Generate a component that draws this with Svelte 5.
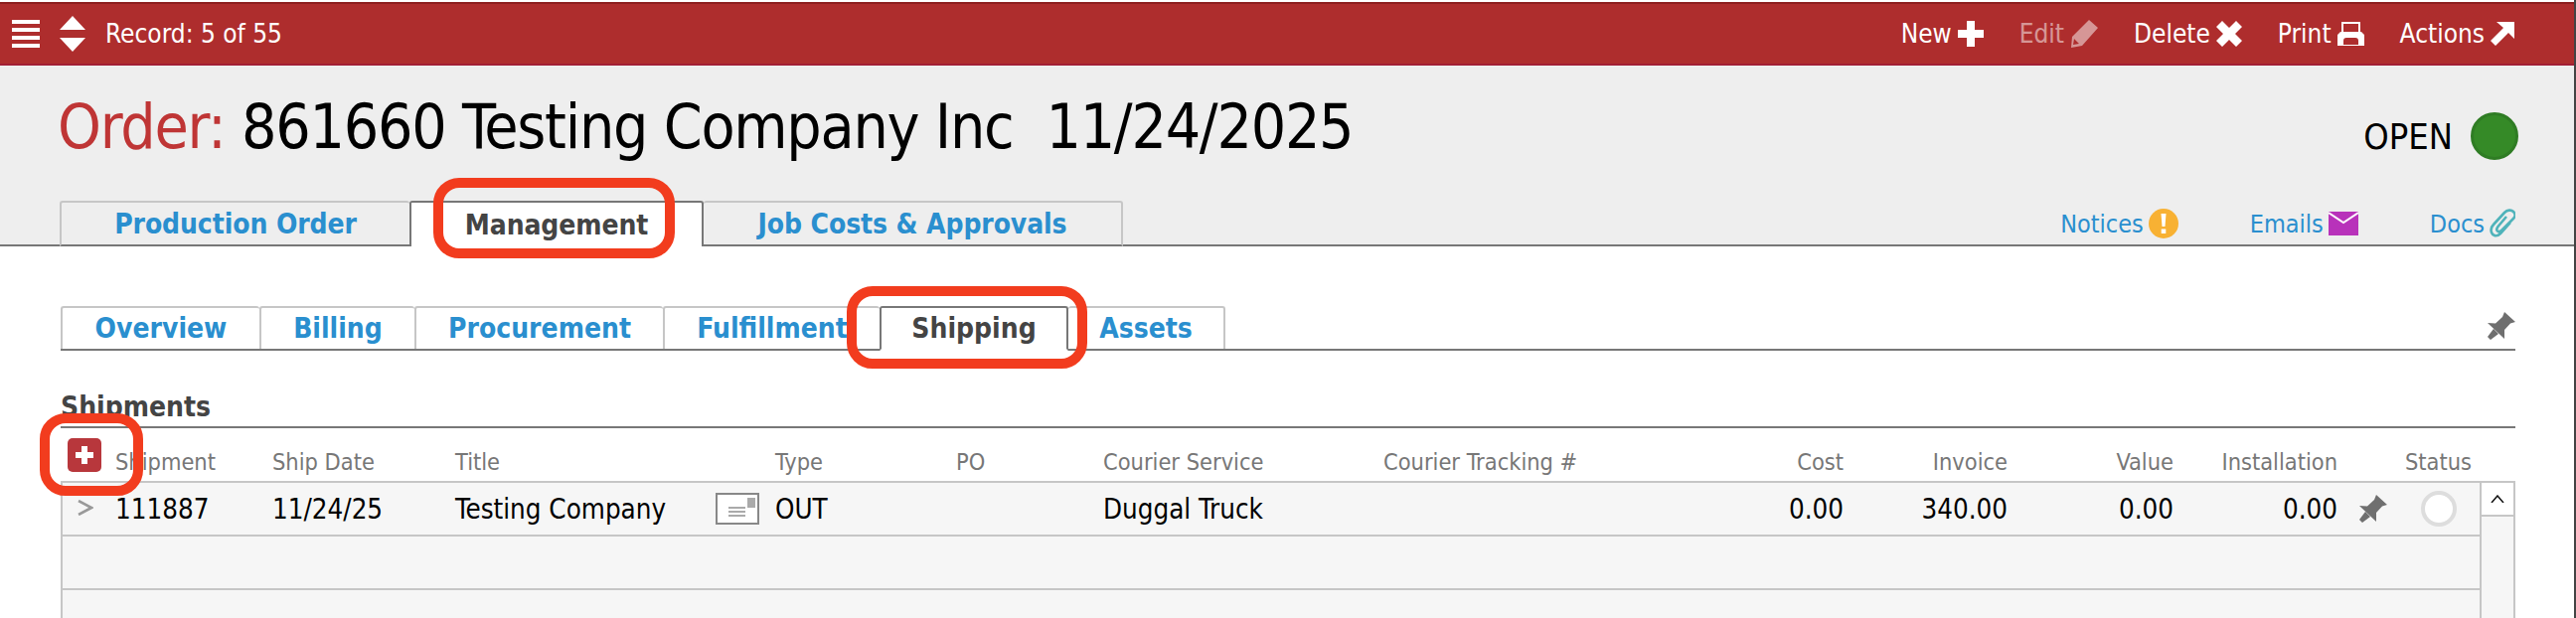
<script>
  const actions = [
    { label: 'New', icon: 'plus' },
    { label: 'Edit', icon: 'pencil', off: true },
    { label: 'Delete', icon: 'cross' },
    { label: 'Print', icon: 'print' },
    { label: 'Actions', icon: 'arrow' }
  ];
  const mainTabs = ['Production Order', 'Management', 'Job Costs & Approvals'];
  const subTabs = ['Overview', 'Billing', 'Procurement', 'Fulfillment', 'Shipping', 'Assets'];
  const pinPath = 'M17 0L28 10L23 11.5L17 18L17 27L0 11L8 11.5L15 5zM6 17L11 22L3 28L0 25z';
</script>

<div class="page">
  <div class="topbar">
    <svg class="burger" viewBox="0 0 28 28" width="28" height="28"><path d="M0 0h28v4H0zM0 8h28v4H0zM0 16h28v4H0zM0 24h28v4H0z" fill="#fff"/></svg>
    <svg class="updown" viewBox="0 0 26 36" width="26" height="36"><path d="M13 0l13 14H0zM0 22h26L13 36z" fill="#fff"/></svg>
    <span class="record">Record: 5 of 55</span>
    <div class="actions">
      {#each actions as a}
        <span class="action" class:off={a.off}>
          {a.label}
          {#if a.icon === 'plus'}
            <svg viewBox="0 0 26 26" width="26" height="26"><path d="M9 0h8v9h9v8h-9v9H9v-9H0V9h9z" fill="#fff"/></svg>
          {:else if a.icon === 'pencil'}
            <svg viewBox="0 0 28 28" width="28" height="28"><path d="M19 0l9 8-16 18-11 2 1-11zM4 19l-1 6 6-1z" fill="#fff" fill-rule="evenodd"/></svg>
          {:else if a.icon === 'cross'}
            <svg viewBox="0 0 26 26" width="26" height="26"><path d="M6 0l7 7 7-7 6 6-7 7 7 7-6 6-7-7-7 7-6-6 7-7-7-7z" fill="#fff"/></svg>
          {:else if a.icon === 'print'}
            <svg viewBox="0 0 27 24" width="27" height="24"><path d="M4 0h19v10h-2V2H6v8H4zM0 13l3-3h21l3 3v11H0zM6 23v-4c0-2 1-3 3-3h9c2 0 3 1 3 3v4z" fill="#fff" fill-rule="evenodd"/></svg>
          {:else}
            <svg viewBox="0 0 24 24" width="24" height="24"><path d="M6 0H24V17L18 11L5 24L0 19L13 6z" fill="#fff"/></svg>
          {/if}
        </span>
      {/each}
    </div>
  </div>

  <header class="head">
    <div class="title-row">
      <h1><span class="order">Order:</span> 861660 Testing Company Inc&nbsp; 11/24/2025</h1>
      <div class="state">OPEN <i class="dot"></i></div>
    </div>
    <div class="tab-row">
      <div class="tabs main">
        {#each mainTabs as t}
          <span class="tab" class:active={t === 'Management'}>{t}</span>
        {/each}
      </div>
      <div class="links">
        <span class="link">Notices
          <svg viewBox="0 0 30 30" width="30" height="30"><circle cx="15" cy="15" r="15" fill="#f8b133"/><path d="M12.5 5h5l-1 13h-3zM12.7 20.5h4.6v4.5h-4.6z" fill="#fff"/></svg>
        </span>
        <span class="link">Emails
          <svg viewBox="0 0 30 24" width="30" height="24"><path d="M0 0h30v24H0z" fill="#b832ba"/><path d="M0 1l15 10L30 1" fill="none" stroke="#fff" stroke-width="2"/></svg>
        </span>
        <span class="link">Docs
          <svg viewBox="0 0 26 30" width="26" height="30"><path d="M21 14L11 25C7 29 3 27 2 24C1 21 2 18 4 16L15 4C18 1 22 1 24 3C26 5 26 8 24 10L12 22C10 24 8 23 7.5 22C7 21 7 20 8.5 18L17 8" fill="none" stroke="#4fb3ba" stroke-width="2.6"/></svg>
        </span>
      </div>
    </div>
  </header>

  <main class="body">
    <div class="tabs sub">
      {#each subTabs as t}
        <span class="tab" class:active={t === 'Shipping'}>{t}</span>
      {/each}
      <svg class="pin toppin" viewBox="0 0 28 28" width="28" height="28"><path d={pinPath} fill="#6f6f6f"/></svg>
    </div>

    <h2>Shipments</h2>

    <div class="grid headrow">
      <span class="addcell"><span class="addbtn"><svg viewBox="0 0 18 18" width="18" height="18"><path d="M6 0h6v6h6v6h-6v6H6v-6H0V6h6z" fill="#fff"/></svg></span></span>
      <span>Shipment</span>
      <span>Ship Date</span>
      <span>Title</span>
      <span></span>
      <span>Type</span>
      <span>PO</span>
      <span>Courier Service</span>
      <span>Courier Tracking #</span>
      <span class="num">Cost</span>
      <span class="num">Invoice</span>
      <span class="num">Value</span>
      <span class="num">Installation</span>
      <span></span>
      <span>Status</span>
    </div>

    <div class="table">
      <div class="rows">
        <div class="grid row">
          <span class="chev"><svg viewBox="0 0 16 16" width="16" height="16"><path d="M1 1l13 7-13 7" fill="none" stroke="#999" stroke-width="2.6"/></svg></span>
          <span>111887</span>
          <span>11/24/25</span>
          <span>Testing Company</span>
          <span class="mailcell">
            <span class="mailbox">
              <svg viewBox="0 0 40 28" width="40" height="28"><path d="M30 3h8v10h-8z" fill="#aaa"/><path d="M11 13h17M11 17h17M11 21h17" stroke="#aaa" stroke-width="2"/></svg>
            </span>
          </span>
          <span>OUT</span>
          <span></span>
          <span>Duggal Truck</span>
          <span></span>
          <span class="num">0.00</span>
          <span class="num">340.00</span>
          <span class="num">0.00</span>
          <span class="num">0.00</span>
          <span class="pincell"><svg viewBox="0 0 28 28" width="28" height="28"><path d={pinPath} fill="#6f6f6f"/></svg></span>
          <span class="statuscell"><i class="ring"></i></span>
        </div>
        <div class="row empty"></div>
        <div class="row empty last"></div>
      </div>
      <div class="scroll">
        <div class="up"><svg viewBox="0 0 14 8" width="14" height="8"><path d="M1 8l6-7 6 7" fill="none" stroke="#111" stroke-width="1.5"/></svg></div>
      </div>
    </div>
  </main>

  <div class="mark m1"></div>
  <div class="mark m2"></div>
  <div class="mark m3"></div>
</div>

<style>
  :global(body) {
    margin: 0;
    background: #fff;
  }

  .page {
    position: relative;
    width: 2592px;
    height: 622px;
    overflow: hidden;
    box-sizing: border-box;
    border-right: 2px solid #444;
    padding-top: 2px;
    font-family: "DejaVu Sans Condensed", "DejaVu Sans", sans-serif;
    font-stretch: condensed;
    color: #000;
  }

  .topbar {
    height: 64px;
    box-sizing: border-box;
    display: flex;
    align-items: center;
    padding: 0 60px 0 12px;
    background: #ae2d2d;
    border-top: 2px solid #8e1f1f;
    border-bottom: 2px solid #a21f35;
    color: #fff;
    font-size: 26px;
  }

  .burger {
    margin-right: 20px;
  }

  .updown {
    margin-right: 20px;
  }

  .actions {
    margin-left: auto;
    display: flex;
    gap: 36px;
  }

  .action {
    display: flex;
    align-items: center;
    gap: 6px;
  }

  .action.off {
    opacity: 0.5;
  }

  .head {
    height: 182px;
    box-sizing: border-box;
    background: #eee;
    border-bottom: 2px solid #777;
    padding: 0 56px 0 60px;
    display: flex;
    flex-direction: column;
    justify-content: space-between;
  }

  .title-row {
    display: flex;
    align-items: center;
    justify-content: space-between;
    padding-top: 24px;
  }

  h1 {
    margin: 0 0 0 -2px;
    font-size: 62px;
    font-weight: 400;
    line-height: 76px;
    letter-spacing: -1.25px;
  }

  .order {
    color: #bf3535;
  }

  .state {
    display: flex;
    align-items: center;
    gap: 18px;
    font-size: 36px;
    margin-top: 18px;
  }

  .dot {
    width: 48px;
    height: 48px;
    box-sizing: border-box;
    border-radius: 50%;
    background: #358a27;
    border: 3px solid #2f7c24;
  }

  .tab-row {
    display: flex;
    align-items: flex-end;
    justify-content: space-between;
  }

  .tabs {
    display: flex;
    align-items: stretch;
  }

  .tab {
    box-sizing: border-box;
    display: flex;
    align-items: center;
    justify-content: center;
    font-weight: 700;
    color: #2a8fcf;
    border: 2px solid #c6c6c6;
    border-right: 0;
    border-bottom: 0;
    border-radius: 3px 3px 0 0;
  }

  .tab.active {
    color: #444;
    background: #fff;
    border-color: #777;
    border-right: 2px solid #777;
  }

  .main {
    height: 46px;
    font-size: 28px;
    letter-spacing: -0.1px;
    margin-bottom: -2px;
  }

  .main .tab {
    border-bottom: 2px solid #777;
  }

  .main .tab.active {
    border-bottom: 0;
  }

  .main .tab:nth-child(1) {
    width: 352px;
  }

  .main .tab:nth-child(2) {
    width: 296px;
  }

  .main .tab:nth-child(3) {
    width: 422px;
    border-left: 0;
    border-right: 2px solid #c6c6c6;
  }

  .links {
    display: flex;
    padding-bottom: 6px;
    margin-right: 3px;
    font-size: 25px;
    color: #2a8fcf;
  }

  .link {
    display: flex;
    align-items: center;
    gap: 5px;
    margin-left: 72px;
  }

  .body {
    padding: 60px 59px 0 61px;
  }

  .sub {
    position: relative;
    height: 43px;
    font-size: 28px;
    border-bottom: 2px solid #777;
    box-sizing: content-box;
  }

  .sub .tab:nth-child(1) {
    width: 200px;
  }

  .sub .tab:nth-child(2) {
    width: 156px;
  }

  .sub .tab:nth-child(3) {
    width: 250px;
  }

  .sub .tab:nth-child(4) {
    width: 218px;
  }

  .sub .tab:nth-child(5) {
    width: 190px;
    border-bottom: 2px solid #fff;
    margin-bottom: -2px;
  }

  .sub .tab:nth-child(6) {
    width: 158px;
    border-left: 0;
    border-right: 2px solid #c6c6c6;
  }

  .toppin {
    margin: 6px 0 0 auto;
  }

  h2 {
    margin: 43px 0 0 0;
    height: 33px;
    font-size: 28px;
    line-height: 28px;
    font-weight: 700;
    color: #444;
  }

  .grid {
    display: grid;
    grid-template-columns: 53px 158px 184px 262px 60px 182px 148px 282px 308px 155px 165px 167px 165px 68px 75px;
    align-items: center;
    white-space: nowrap;
  }

  .headrow {
    height: 55px;
    box-sizing: border-box;
    border-top: 2px solid #777;
    padding-left: 2px;
    padding-right: 34px;
    color: #777;
    font-size: 23.4px;
    padding-top: 14px;
  }

  .num {
    text-align: right;
  }

  .addcell {
    margin-top: -14px;
    padding-left: 5px;
  }

  .addbtn {
    width: 34px;
    height: 34px;
    border-radius: 5px;
    background: #b8373c;
    display: flex;
    align-items: center;
    justify-content: center;
  }

  .table {
    display: flex;
    height: 140px;
    box-sizing: border-box;
    border: 2px solid #c6c6c6;
    border-bottom: 0;
    background: #f6f6f6;
  }

  .rows {
    width: 2432px;
  }

  .row {
    height: 52px;
    font-size: 27.5px;
    box-sizing: content-box;
    border-bottom: 2px solid #c6c6c6;
  }

  .empty {
    height: 52px;
  }

  .last {
    border-bottom: 0;
  }

  .chev,
  .pincell,
  .statuscell,
  .mailcell {
    display: flex;
    align-items: center;
  }

  .chev {
    padding-left: 15px;
    margin-top: -2px;
  }

  .pincell {
    padding-left: 22px;
  }

  .statuscell {
    padding-left: 16px;
  }

  .ring {
    width: 36px;
    height: 36px;
    box-sizing: border-box;
    border-radius: 50%;
    border: 4px solid #ddd;
    background: #fff;
  }

  .mailbox {
    display: flex;
    width: 44px;
    height: 32px;
    box-sizing: border-box;
    border: 2px solid #888;
    background: #fff;
  }

  .scroll {
    width: 33px;
    border-left: 2px solid #c6c6c6;
  }

  .up {
    height: 32px;
    background: #fff;
    border-bottom: 2px solid #c6c6c6;
    display: flex;
    align-items: center;
    justify-content: center;
  }

  .mark {
    position: absolute;
    box-sizing: border-box;
    border: 10px solid #f23c1e;
    border-radius: 26px;
  }

  .m1 {
    left: 436px;
    top: 179px;
    width: 243px;
    height: 81px;
  }

  .m2 {
    left: 852px;
    top: 288px;
    width: 242px;
    height: 83px;
  }

  .m3 {
    left: 40px;
    top: 416px;
    width: 104px;
    height: 83px;
  }
</style>
